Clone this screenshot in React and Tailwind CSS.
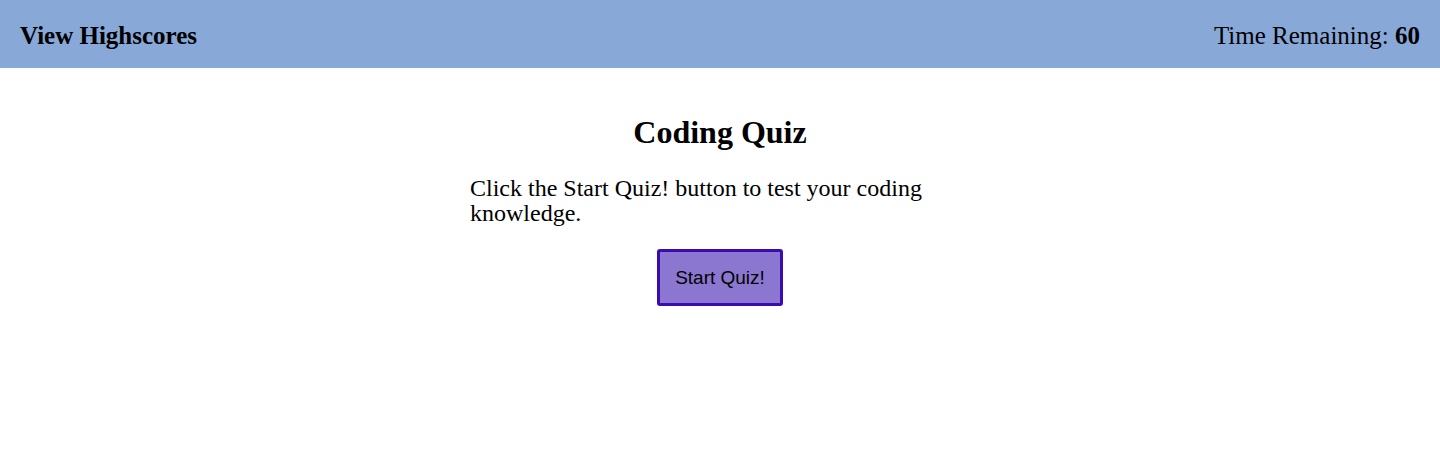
import React, { useState } from 'react';

const App = () => {
  const [timeLeft] = useState(60);

  return (
    <div className="min-h-screen bg-white text-black font-['Liberation_Serif','Times_New_Roman',serif]">
      {/* Header */}
      <header className="h-[68px] bg-[#88a8d8] flex items-center justify-between px-5 pt-1">
        <a href="#" className="text-[25px] font-bold">View Highscores</a>
        <div className="text-[25px]">
          Time Remaining: <span className="font-bold">{timeLeft}</span>
        </div>
      </header>

      {/* Intro */}
      <main className="w-[500px] mx-auto pt-[46px]">
        <h1 className="text-[32px] leading-[37px] font-bold text-center">Coding Quiz</h1>
        <p className="mt-[25px] text-[24px] leading-[25px]">
          Click the Start Quiz! button to test your coding knowledge.
        </p>
        <div className="flex justify-center mt-[23px]">
          <button className="bg-[#8b77d0] border-3 border-[#3a0bb0] rounded-[3px] px-[15px] py-[15px] text-[19px] leading-[21px] font-['Liberation_Sans',Arial,sans-serif]">
            Start Quiz!
          </button>
        </div>
      </main>
    </div>
  );
};

export default App;
